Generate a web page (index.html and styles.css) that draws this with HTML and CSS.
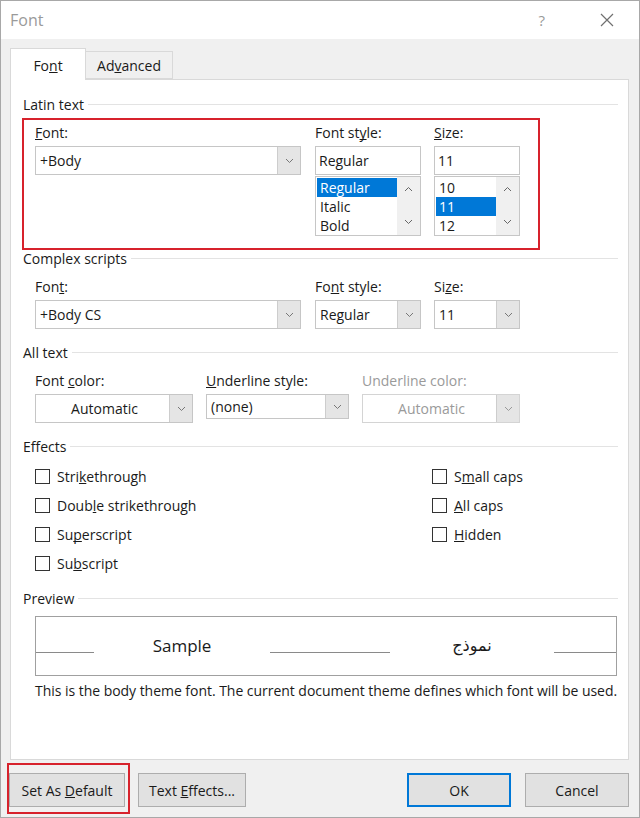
FILE: index.html
```html
<!DOCTYPE html>
<html lang="en">
<head>
    <meta charset="UTF-8">
    <meta name="viewport" content="width=device-width, initial-scale=1.0">
    <title>Font</title>
    <link rel="stylesheet" href="styles.css">
</head>
<body>
    <div class="window">
        <div class="titlebar">
            <span class="title">Font</span>
            <span class="help">?</span>
            <span class="close">
                <svg width="14" height="14" viewBox="0 0 14 14"><path d="M1 1 L13 13 M13 1 L1 13" stroke="#707070" stroke-width="1.2" fill="none"/></svg>
            </span>
        </div>

        <div class="tabs">
            <div class="tab active">Fo<u>n</u>t</div>
            <div class="tab">Ad<u>v</u>anced</div>
        </div>

        <div class="panel">
            <div class="group-title">Latin text</div>
            <div class="highlight latin">
                <div class="field w-font">
                    <label><u>F</u>ont:</label>
                    <div class="combo">
                        <span class="combo-text">+Body</span>
                        <span class="combo-btn"><svg width="9" height="6" viewBox="0 0 9 6"><path d="M1 1 L4.5 4.5 L8 1" stroke="#777" fill="none"/></svg></span>
                    </div>
                </div>
                <div class="field w-style">
                    <label>Font st<u>y</u>le:</label>
                    <div class="textbox">Regular</div>
                    <div class="listbox">
                        <div class="items">
                            <div class="item selected">Regular</div>
                            <div class="item">Italic</div>
                            <div class="item">Bold</div>
                        </div>
                        <div class="scrollbar">
                            <svg width="9" height="6" viewBox="0 0 9 6"><path d="M1 5 L4.5 1.5 L8 5" stroke="#666" fill="none"/></svg>
                            <svg width="9" height="6" viewBox="0 0 9 6"><path d="M1 1 L4.5 4.5 L8 1" stroke="#666" fill="none"/></svg>
                        </div>
                    </div>
                </div>
                <div class="field w-size">
                    <label><u>S</u>ize:</label>
                    <div class="textbox">11</div>
                    <div class="listbox">
                        <div class="items">
                            <div class="item">10</div>
                            <div class="item selected">11</div>
                            <div class="item">12</div>
                        </div>
                        <div class="scrollbar">
                            <svg width="9" height="6" viewBox="0 0 9 6"><path d="M1 5 L4.5 1.5 L8 5" stroke="#666" fill="none"/></svg>
                            <svg width="9" height="6" viewBox="0 0 9 6"><path d="M1 1 L4.5 4.5 L8 1" stroke="#666" fill="none"/></svg>
                        </div>
                    </div>
                </div>
            </div>

            <div class="group-title complex">Complex scripts</div>
            <div class="row">
                <div class="field w-font">
                    <label>Fon<u>t</u>:</label>
                    <div class="combo">
                        <span class="combo-text">+Body CS</span>
                        <span class="combo-btn"><svg width="9" height="6" viewBox="0 0 9 6"><path d="M1 1 L4.5 4.5 L8 1" stroke="#777" fill="none"/></svg></span>
                    </div>
                </div>
                <div class="field w-style">
                    <label>Fo<u>n</u>t style:</label>
                    <div class="combo">
                        <span class="combo-text">Regular</span>
                        <span class="combo-btn"><svg width="9" height="6" viewBox="0 0 9 6"><path d="M1 1 L4.5 4.5 L8 1" stroke="#777" fill="none"/></svg></span>
                    </div>
                </div>
                <div class="field w-size">
                    <label>Si<u>z</u>e:</label>
                    <div class="combo">
                        <span class="combo-text">11</span>
                        <span class="combo-btn"><svg width="9" height="6" viewBox="0 0 9 6"><path d="M1 1 L4.5 4.5 L8 1" stroke="#777" fill="none"/></svg></span>
                    </div>
                </div>
            </div>

            <div class="group-title">All text</div>
            <div class="row">
                <div class="field w-color">
                    <label>Font <u>c</u>olor:</label>
                    <div class="combo">
                        <span class="combo-text centered">Automatic</span>
                        <span class="combo-btn"><svg width="9" height="6" viewBox="0 0 9 6"><path d="M1 1 L4.5 4.5 L8 1" stroke="#777" fill="none"/></svg></span>
                    </div>
                </div>
                <div class="field w-uline">
                    <label><u>U</u>nderline style:</label>
                    <div class="combo short">
                        <span class="combo-text">(none)</span>
                        <span class="combo-btn"><svg width="9" height="6" viewBox="0 0 9 6"><path d="M1 1 L4.5 4.5 L8 1" stroke="#777" fill="none"/></svg></span>
                    </div>
                </div>
                <div class="field w-color disabled">
                    <label>Underline color:</label>
                    <div class="combo">
                        <span class="combo-text centered">Automatic</span>
                        <span class="combo-btn"><svg width="9" height="6" viewBox="0 0 9 6"><path d="M1 1 L4.5 4.5 L8 1" stroke="#999" fill="none"/></svg></span>
                    </div>
                </div>
            </div>

            <div class="group-title">Effects</div>
            <div class="effects">
                <div class="check"><span class="box"></span><span>Stri<u>k</u>ethrough</span></div>
                <div class="check"><span class="box"></span><span>S<u>m</u>all caps</span></div>
                <div class="check"><span class="box"></span><span>Doub<u>l</u>e strikethrough</span></div>
                <div class="check"><span class="box"></span><span><u>A</u>ll caps</span></div>
                <div class="check"><span class="box"></span><span>Su<u>p</u>erscript</span></div>
                <div class="check"><span class="box"></span><span><u>H</u>idden</span></div>
                <div class="check"><span class="box"></span><span>Su<u>b</u>script</span></div>
            </div>

            <div class="group-title">Preview</div>
            <div class="preview">
                <div class="rule r1"></div>
                <div class="sample s1">Sample</div>
                <div class="rule r2"></div>
                <div class="sample s2" lang="ar" dir="rtl">نموذج</div>
                <div class="rule r3"></div>
            </div>
            <p class="note">This is the body theme font. The current document theme defines which font will be used.</p>
        </div>

        <div class="buttons">
            <div class="highlight mark">
                <button class="btn b-default">Set As <u>D</u>efault</button>
            </div>
            <button class="btn b-effects">Text <u>E</u>ffects...</button>
            <button class="btn b-ok">OK</button>
            <button class="btn b-cancel">Cancel</button>
        </div>
    </div>
</body>
</html>
```

FILE: styles.css
```css
body {
    margin: 0;
    font-family: "Open Sans", "Noto Sans", sans-serif;
    font-size: 14px;
    color: #1a1a1a;
    background: #fff;
}
u {
    text-decoration-skip-ink: none;
}
.window {
    width: 640px;
    height: 818px;
    box-sizing: border-box;
    border: 1px solid #a8a8a8;
    background: #f0f0f0;
}
.titlebar {
    height: 38px;
    background: #fff;
    display: flex;
    align-items: center;
    padding-left: 9px;
}
.title {
    font-size: 16px;
    color: #9a9a9a;
}
.help {
    margin-left: auto;
    font-size: 15px;
    color: #9a9a9a;
}
.close {
    display: flex;
    margin: 0 25px 0 55px;
}
.tabs {
    display: flex;
    align-items: flex-end;
    height: 32px;
    margin: 9px 0 -1px 9px;
    position: relative;
    z-index: 1;
}
.tab {
    box-sizing: border-box;
    width: 87px;
    height: 28px;
    margin-bottom: 1px;
    border: 1px solid #d9d9d9;
    border-left: none;
    display: flex;
    align-items: center;
    justify-content: center;
    font-size: 14px;
}
.tab.active {
    width: 76px;
    height: 32px;
    margin-bottom: 0;
    border-left: 1px solid #d9d9d9;
    border-bottom: none;
    background: #fff;
    padding-top: 2px;
}
.panel {
    box-sizing: border-box;
    height: 681px;
    margin: 0 10px 0 9px;
    padding: 14px 10px 0 12px;
    background: #fff;
    border: 1px solid #d9d9d9;
}
.group-title {
    display: flex;
    align-items: center;
    height: 20px;
    gap: 4px;
    margin-top: 13px;
}
.group-title:first-child {
    margin-top: 0;
}
.group-title::after {
    content: "";
    flex: 1;
    border-top: 1px solid #e3e3e3;
}
.group-title.complex {
    margin-top: -2px;
}
.highlight {
    border: 2px solid #d7222c;
}
.latin {
    width: 518px;
    box-sizing: border-box;
    margin: 4px 0 0 -1px;
    padding: 3px 0 12px 11px;
    display: flex;
    gap: 13px;
}
.latin .w-font {
    margin-right: 1px;
}
.row {
    display: flex;
    gap: 13px;
    padding-left: 12px;
    margin-top: 9px;
}
.row .w-font {
    margin-right: 1px;
}
.field label {
    display: block;
    height: 20px;
    line-height: 20px;
    margin-bottom: 3px;
}
.w-font { width: 266px; }
.w-style { width: 106px; }
.w-size { width: 86px; }
.w-color { width: 158px; }
.w-uline { width: 143px; }
.combo {
    box-sizing: border-box;
    height: 29px;
    display: flex;
    border: 1px solid #c6c6c6;
    background: #fff;
}
.combo.short {
    height: 25px;
}
.combo-text {
    flex: 1;
    padding-left: 4px;
    line-height: 27px;
    white-space: nowrap;
}
.combo.short .combo-text {
    line-height: 23px;
}
.combo-text.centered {
    text-align: center;
}
.combo-btn {
    width: 22px;
    background: #e5e5e5;
    border-left: 1px solid #cdcdcd;
    display: flex;
    align-items: center;
    justify-content: center;
}
.disabled label,
.disabled .combo-text {
    color: #9a9a9a;
}
.disabled .combo {
    border-color: #d4d4d4;
}
.textbox {
    box-sizing: border-box;
    height: 29px;
    border: 1px solid #c6c6c6;
    padding-left: 3px;
    line-height: 27px;
}
.listbox {
    box-sizing: border-box;
    height: 60px;
    margin-top: 1px;
    border: 1px solid #c6c6c6;
    display: flex;
    overflow: hidden;
}
.items {
    flex: 1;
    padding: 1px 0 0 1px;
}
.item {
    height: 19px;
    line-height: 19px;
    padding-left: 3px;
}
.item.selected {
    background: #0078d7;
    color: #fff;
}
.scrollbar {
    width: 23px;
    background: #f0f0f0;
    display: flex;
    flex-direction: column;
    align-items: center;
    justify-content: space-between;
    padding: 9px 0 10px;
}
.effects {
    display: grid;
    grid-template-columns: 397px 1fr;
    grid-auto-rows: 29px;
    padding-left: 12px;
    margin-top: 6px;
}
.check {
    display: flex;
    align-items: center;
    gap: 7px;
}
.box {
    width: 13px;
    height: 13px;
    border: 1px solid #333;
    background: #fff;
}
.effects + .group-title {
    margin-top: 10px;
}
.preview {
    box-sizing: border-box;
    height: 60px;
    margin: 8px 0 0 12px;
    width: 582px;
    border: 1px solid #a0a0a0;
    display: flex;
    align-items: flex-start;
}
.rule {
    height: 35px;
    border-bottom: 1px solid #8a8a8a;
}
.r1 { width: 58px; }
.r2 { width: 120px; }
.r3 { width: 62px; }
.sample {
    line-height: 58px;
    text-align: center;
    font-size: 17px;
}
.s1 { width: 176px; }
.s2 {
    width: 164px;
    font-family: "DejaVu Sans", sans-serif;
    font-size: 16px;
}
.note {
    margin: 5px 0 0 12px;
    line-height: 20px;
    white-space: nowrap;
    letter-spacing: -0.035px;
}
.buttons {
    display: flex;
    align-items: flex-start;
    margin-top: 3px;
    padding: 0 10px 0 6px;
}
.mark {
    padding: 8px 3px 5px 0;
}
.btn {
    box-sizing: border-box;
    height: 34px;
    font-family: inherit;
    font-size: 14px;
    color: #1a1a1a;
    background: #e1e1e1;
    border: 1px solid #adadad;
    padding: 0;
}
.b-default { width: 116px; }
.b-effects {
    width: 108px;
    margin: 10px 0 0 8px;
}
.b-ok {
    width: 104px;
    margin: 10px 0 0 auto;
    border-color: #0078d7;
    box-shadow: inset 0 0 0 1px #0078d7;
}
.b-cancel {
    width: 104px;
    margin: 10px 0 0 14px;
}
```
